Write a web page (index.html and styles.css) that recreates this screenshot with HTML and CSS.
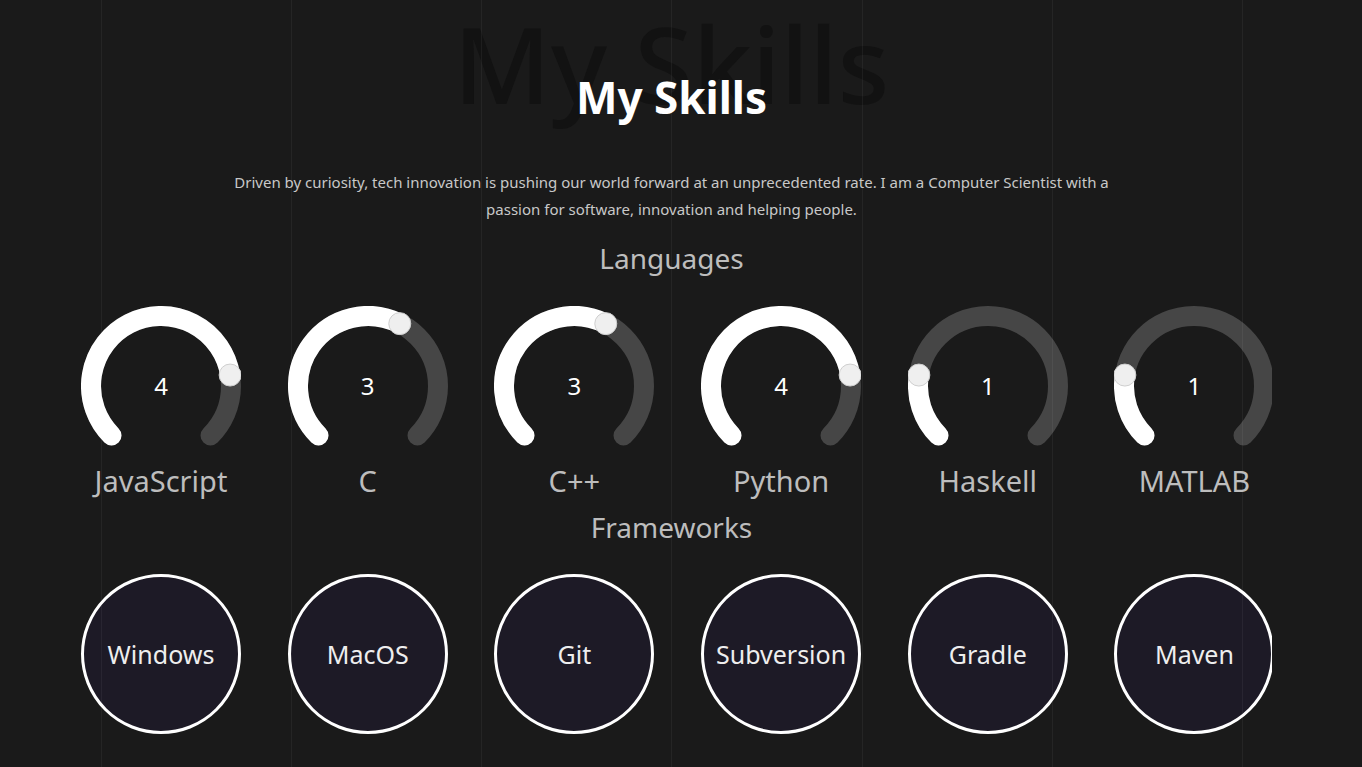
FILE: index.html
```html
<!DOCTYPE html>
<html lang="en">
<head>
<meta charset="utf-8">
<title>My Skills</title>
<link rel="stylesheet" href="styles.css">
</head>
<body>
<section class="skills">
  <header class="head">
    <div class="ghost">My Skills</div>
    <h1 class="title">My Skills</h1>
  </header>
  <p class="intro">Driven by curiosity, tech innovation is pushing our world forward at an unprecedented rate. I am a Computer Scientist with a passion for software, innovation and helping people.</p>

  <h2 class="group">Languages</h2>
  <div class="row-wrap">
    <div class="row">
      <div class="item">
        <div class="gauge">
          <svg viewBox="0 0 160 160" width="160" height="160">
            <path class="track" d="M30.503 129.497 A70 70 0 1 1 129.497 129.497"/>
            <path class="bar" d="M30.503 129.497 A70 70 0 1 1 149.138 69.050"/>
            <circle class="knob" cx="149.138" cy="69.050" r="11"/>
          </svg>
          <span class="num">4</span>
        </div>
        <div class="label">JavaScript</div>
      </div>
      <div class="item">
        <div class="gauge">
          <svg viewBox="0 0 160 160" width="160" height="160">
            <path class="track" d="M30.503 129.497 A70 70 0 1 1 129.497 129.497"/>
            <path class="bar" d="M30.503 129.497 A70 70 0 0 1 111.78 17.63"/>
            <circle class="knob" cx="111.78" cy="17.63" r="11"/>
          </svg>
          <span class="num">3</span>
        </div>
        <div class="label">C</div>
      </div>
      <div class="item">
        <div class="gauge">
          <svg viewBox="0 0 160 160" width="160" height="160">
            <path class="track" d="M30.503 129.497 A70 70 0 1 1 129.497 129.497"/>
            <path class="bar" d="M30.503 129.497 A70 70 0 0 1 111.78 17.63"/>
            <circle class="knob" cx="111.78" cy="17.63" r="11"/>
          </svg>
          <span class="num">3</span>
        </div>
        <div class="label">C++</div>
      </div>
      <div class="item">
        <div class="gauge">
          <svg viewBox="0 0 160 160" width="160" height="160">
            <path class="track" d="M30.503 129.497 A70 70 0 1 1 129.497 129.497"/>
            <path class="bar" d="M30.503 129.497 A70 70 0 1 1 149.138 69.050"/>
            <circle class="knob" cx="149.138" cy="69.050" r="11"/>
          </svg>
          <span class="num">4</span>
        </div>
        <div class="label">Python</div>
      </div>
      <div class="item">
        <div class="gauge">
          <svg viewBox="0 0 160 160" width="160" height="160">
            <path class="track" d="M30.503 129.497 A70 70 0 1 1 129.497 129.497"/>
            <path class="bar" d="M30.503 129.497 A70 70 0 0 1 10.86 69.05"/>
            <circle class="knob" cx="10.86" cy="69.05" r="11"/>
          </svg>
          <span class="num">1</span>
        </div>
        <div class="label">Haskell</div>
      </div>
      <div class="item">
        <div class="gauge">
          <svg viewBox="0 0 160 160" width="160" height="160">
            <path class="track" d="M30.503 129.497 A70 70 0 1 1 129.497 129.497"/>
            <path class="bar" d="M30.503 129.497 A70 70 0 0 1 10.86 69.05"/>
            <circle class="knob" cx="10.86" cy="69.05" r="11"/>
          </svg>
          <span class="num">1</span>
        </div>
        <div class="label">MATLAB</div>
      </div>
    </div>
  </div>

  <h2 class="group group-fw">Frameworks</h2>
  <div class="row-wrap">
    <div class="row fw-row">
      <div class="item"><div class="bubble">Windows</div></div>
      <div class="item"><div class="bubble">MacOS</div></div>
      <div class="item"><div class="bubble">Git</div></div>
      <div class="item"><div class="bubble">Subversion</div></div>
      <div class="item"><div class="bubble">Gradle</div></div>
      <div class="item"><div class="bubble">Maven</div></div>
    </div>
  </div>
</section>

<div class="lines" aria-hidden="true">
  <span></span><span></span><span></span><span></span><span></span><span></span><span></span>
</div>
</body>
</html>
```

FILE: styles.css
```css
html, body {
  margin: 0;
  padding: 0;
  background: #1a1a1a;
  height: 100%;
  overflow: hidden;
}

body {
  font-family: "Noto Sans", "Open Sans", sans-serif;
  color: #fff;
}

.skills {
  width: 1343px;
  display: flex;
  flex-direction: column;
  align-items: center;
}

.head {
  position: relative;
  width: 100%;
  height: 140px;
  display: flex;
  justify-content: center;
}

.ghost {
  position: absolute;
  top: -7px;
  left: 0;
  right: 0;
  text-align: center;
  font-size: 106px;
  line-height: 140px;
  font-weight: 500;
  color: #121212;
  pointer-events: none;
}

.title {
  position: relative;
  margin: 0;
  padding-top: 70px;
  font-size: 44px;
  line-height: 54px;
  font-weight: 700;
  color: #fff;
}

.intro {
  width: 900px;
  margin: 29px 0 0;
  text-align: center;
  font-size: 15px;
  line-height: 27px;
  color: #c8c8c8;
}

.group {
  margin: 15px 0 0;
  font-size: 28px;
  line-height: 40px;
  font-weight: 400;
  color: #bdbdbd;
}

.group-fw {
  margin-top: 8px;
}

.row-wrap {
  align-self: stretch;
  padding-left: 81px;
}

.row {
  width: 1191px;
  overflow: hidden;
  display: flex;
  gap: 46.7px;
  margin-top: 28px;
}

.item {
  flex: 0 0 160px;
  display: flex;
  flex-direction: column;
  align-items: center;
}

.gauge {
  position: relative;
  width: 160px;
  height: 160px;
}

.gauge svg {
  display: block;
}

.track {
  fill: none;
  stroke: #464646;
  stroke-width: 20;
  stroke-linecap: round;
}

.bar {
  fill: none;
  stroke: #ffffff;
  stroke-width: 20;
  stroke-linecap: round;
}

.knob {
  fill: #efefef;
  stroke: #cfcfcf;
  stroke-width: 1;
}

.num {
  position: absolute;
  left: 0;
  right: 0;
  top: 62px;
  text-align: center;
  font-size: 24px;
  line-height: 36px;
  color: #fff;
}

.label {
  margin-top: -3px;
  font-size: 29px;
  line-height: 36px;
  color: #bdbdbd;
  white-space: nowrap;
}

.fw-row {
  margin-top: 27px;
}

.bubble {
  box-sizing: border-box;
  width: 160px;
  height: 160px;
  border: 3px solid #fff;
  border-radius: 50%;
  background: rgba(29, 26, 39, 0.95);
  display: flex;
  align-items: center;
  justify-content: center;
  font-size: 25px;
  color: #eeeeee;
  white-space: nowrap;
}

.lines {
  position: fixed;
  inset: 0;
  display: flex;
  justify-content: space-between;
  padding: 0 119px 0 101px;
  pointer-events: none;
}

.lines span {
  width: 1px;
  height: 100%;
  background: rgba(255, 255, 255, 0.05);
}
```
